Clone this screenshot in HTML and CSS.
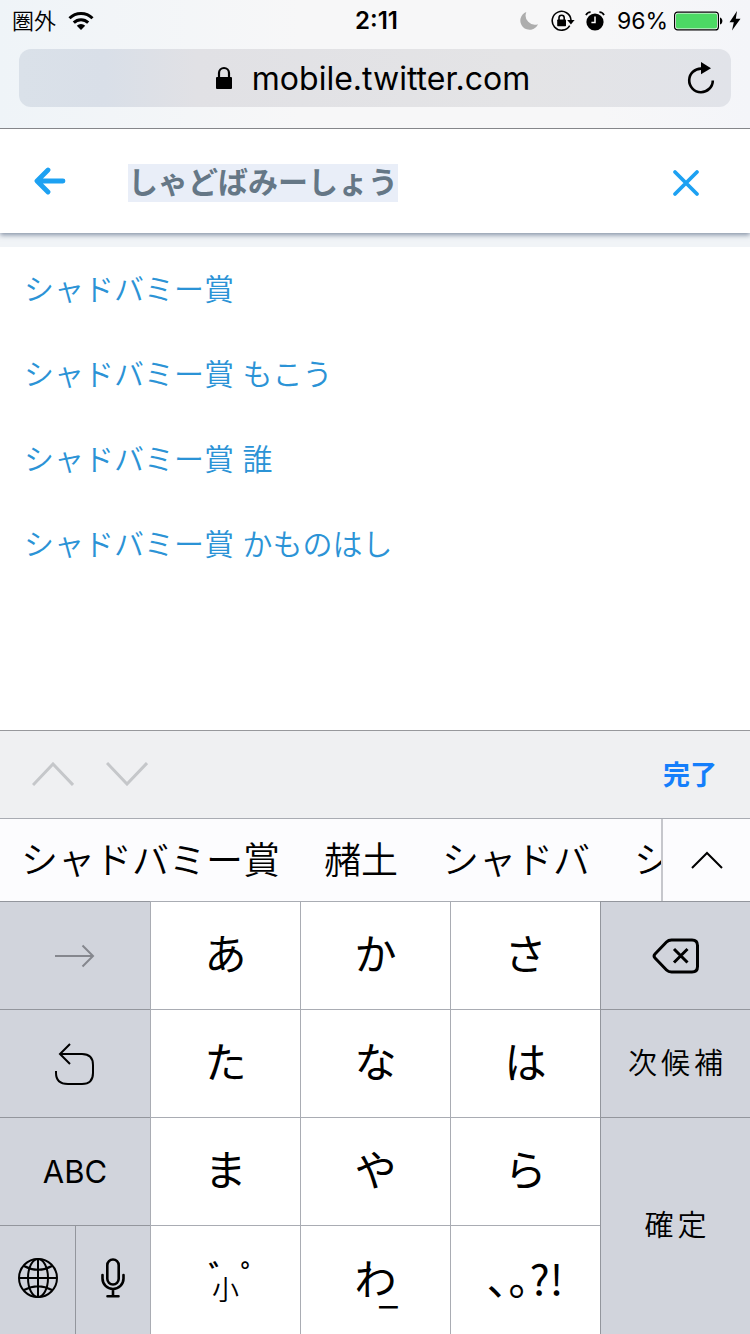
FILE: index.html
```html
<!DOCTYPE html>
<html lang="ja">
<head>
  <meta charset="UTF-8" />
  <meta name="viewport" content="width=device-width, initial-scale=1">
  <title>mobile.twitter.com</title>
  <link rel="stylesheet" href="styles.css">
</head>
<body>
  <header class="browser-bar">
    <div class="status-bar">
      <div class="status-left">
        <span class="carrier">圏外</span>
        <svg class="icon" width="26" height="20" viewBox="0 0 26 20" fill="none" stroke="#000" stroke-width="3">
          <path d="M1.5 7.2a16.4 16.4 0 0 1 23 0" />
          <path d="M5.8 11.6a10.3 10.3 0 0 1 14.4 0" />
          <path d="M13 19l-4.2-4.3a6 6 0 0 1 8.4 0z" fill="#000" stroke="none" />
        </svg>
      </div>
      <time class="clock">2:11</time>
      <div class="status-right">
        <svg class="icon" width="20" height="20" viewBox="0 0 20 20">
          <path d="M7.3 1A9.2 9.2 0 1 0 19 13.2 9.3 9.3 0 0 1 7.3 1z" fill="#adadad" />
        </svg>
        <svg class="icon lock-rotation" width="24" height="22" viewBox="0 0 24 22">
          <path d="M18.7 15.6A9.4 9.4 0 1 1 20 10" fill="none" stroke="#000" stroke-width="1.6" />
          <path d="M16.2 10h7.4l-3.7 4.4z" />
          <rect x="6.2" y="9.6" width="8.8" height="6.6" rx="0.6" />
          <path d="M8 10V7.8a2.6 2.6 0 0 1 5.2 0V10" fill="none" stroke="#000" stroke-width="1.6" />
        </svg>
        <svg class="icon alarm" width="20" height="20" viewBox="0 0 20 20">
          <circle cx="10" cy="11" r="8.6" />
          <path d="M1 4.2a5 5 0 0 1 4.6-3M19 4.2a5 5 0 0 0-4.6-3" fill="none" stroke="#000" stroke-width="1.7" />
          <path d="M10 5.6v6H6.4" fill="none" stroke="#fff" stroke-width="1.5" />
        </svg>
        <span class="battery-level">96%</span>
        <svg class="icon" width="50" height="20" viewBox="0 0 50 20">
          <rect x="0.6" y="1.1" width="43.8" height="17.8" rx="3" fill="#fff" stroke="#000" stroke-width="1.2" />
          <rect x="2" y="2.4" width="41" height="15.2" rx="1.8" fill="#4cd964" />
          <path d="M46 6.5c3.2 1 3.2 6 0 7z" />
        </svg>
        <svg class="icon bolt" width="12" height="20" viewBox="0 0 12 20">
          <path d="M8 0L0.5 11.2h4.3L3 19.4l8.5-11.6H6.8z" />
        </svg>
      </div>
    </div>
    <div class="address-bar">
      <button class="address" type="button">
        <svg class="icon" width="16" height="24" viewBox="0 0 16 24">
          <rect y="11" width="16" height="12" rx="1" />
          <path d="M3 12V7a5 5 0 0 1 10 0v5" fill="none" stroke="#000" stroke-width="2.2" />
        </svg>
        <span>mobile.twitter.com</span>
      </button>
      <button class="reload" type="button" aria-label="再読み込み">
        <svg class="icon" width="28" height="32" viewBox="0 0 28 32">
          <path d="M14.5 6.6A11.8 11.8 0 1 0 25.8 18.4" fill="none" stroke="#000" stroke-width="2.6" />
          <path d="M14 0l10 6.2-10 6z" />
        </svg>
      </button>
    </div>
  </header>

  <form class="search-bar">
    <button class="back" type="button" aria-label="戻る">
      <svg class="icon" width="32" height="28" viewBox="0 0 32 28" fill="none" stroke="#1da1f2" stroke-width="4.8" stroke-linecap="round" stroke-linejoin="round">
        <path d="M14 3L3 14l11 11M3.5 14H29" />
      </svg>
    </button>
    <label class="search-field">
      <input class="search-input" type="text" aria-label="検索" value="しゃどばみーしょう">
    </label>
    <button class="clear" type="button" aria-label="クリア">
      <svg class="icon" width="28" height="28" viewBox="0 0 28 28" fill="none" stroke="#1da1f2" stroke-width="3.8" stroke-linecap="round">
        <path d="M3 3l22 22M25 3L3 25" />
      </svg>
    </button>
  </form>

  <main class="results">
    <ul class="suggestions">
      <li><a href="#">シャドバミー賞</a></li>
      <li><a href="#">シャドバミー賞 もこう</a></li>
      <li><a href="#">シャドバミー賞 誰</a></li>
      <li><a href="#">シャドバミー賞 かものはし</a></li>
    </ul>
  </main>

  <section class="keyboard">
    <div class="accessory">
      <button type="button" aria-label="前へ">
        <svg class="icon" width="42" height="24" viewBox="0 0 42 24" fill="none" stroke="#c5c7ca" stroke-width="3">
          <path d="M1 23L21 2l20 21" />
        </svg>
      </button>
      <button type="button" aria-label="次へ">
        <svg class="icon" width="42" height="24" viewBox="0 0 42 24" fill="none" stroke="#c5c7ca" stroke-width="3">
          <path d="M1 1l20 21L41 1" />
        </svg>
      </button>
      <button class="done" type="button">完了</button>
    </div>

    <div class="candidates">
      <div class="candidate-list">
        <button type="button">シャドバミー賞</button>
        <button type="button">赭土</button>
        <button type="button">シャドバ</button>
        <button type="button">シ</button>
      </div>
      <button class="expand" type="button" aria-label="候補を表示">
        <svg class="icon" width="32" height="18" viewBox="0 0 32 18" fill="none" stroke="#000" stroke-width="2">
          <path d="M1 17L16 2l15 15" />
        </svg>
      </button>
    </div>

    <div class="keys">
      <button class="key side" type="button" aria-label="次の文字">
        <svg class="icon" width="40" height="24" viewBox="0 0 40 24" fill="none" stroke="#85878e" stroke-width="2">
          <path d="M0 12h38M27.5 1.5L38 12 27.5 22.5" />
        </svg>
      </button>
      <button class="key kana" type="button">あ</button>
      <button class="key kana" type="button">か</button>
      <button class="key kana" type="button">さ</button>
      <button class="key side" type="button" aria-label="削除">
        <svg class="icon" width="48" height="36" viewBox="0 0 48 36" fill="none" stroke="#000" stroke-width="3" stroke-linejoin="round">
          <path d="M19.5 2H40q5.5 0 5.5 5.5v21q0 5.5-5.5 5.5H19.5q-3 0-5-2L3 20q-2-2 0-4L14.5 4q2-2 5-2z" />
          <path d="M22 11l13.5 13.5M35.5 11L22 24.5" />
        </svg>
      </button>

      <button class="key side" type="button" aria-label="戻す">
        <svg class="icon" width="40" height="42" viewBox="0 0 40 42" fill="none" stroke="#000" stroke-width="2">
          <path d="M15 1L5 11l10 10M5 11h22q11 0 11 11v8q0 11-11 11H13Q1 41 1 30v-2" />
        </svg>
      </button>
      <button class="key kana" type="button">た</button>
      <button class="key kana" type="button">な</button>
      <button class="key kana" type="button">は</button>
      <button class="key side word" type="button">次候補</button>

      <button class="key side latin" type="button">ABC</button>
      <button class="key kana" type="button">ま</button>
      <button class="key kana" type="button">や</button>
      <button class="key kana" type="button">ら</button>
      <button class="key side word enter" type="button">確定</button>

      <div class="split">
        <button class="key side" type="button" aria-label="キーボードを切り替え">
          <svg class="icon" width="40" height="40" viewBox="0 0 40 40" fill="none" stroke="#000" stroke-width="2">
            <circle cx="20" cy="20" r="19" />
            <ellipse cx="20" cy="20" rx="10" ry="19" />
            <path d="M20 1v38M1 20h38M6 8q14 7.5 28 0M6 32q14-7.5 28 0" />
          </svg>
        </button>
        <button class="key side" type="button" aria-label="音声入力">
          <svg class="icon" width="24" height="40" viewBox="0 0 24 40" fill="none" stroke="#000" stroke-width="2.6" stroke-linecap="round">
            <rect x="6.3" y="1.5" width="11.4" height="25" rx="5.7" />
            <path d="M1.5 17v3.5a10.5 10.5 0 0 0 21 0V17M12 31v7M6.5 38.3h11" />
          </svg>
        </button>
      </div>
      <button class="key marks" type="button">
        <span class="voiced">゛゜</span>
        <span class="small">小</span>
      </button>
      <button class="key kana wa" type="button">わ<span class="bar">_</span></button>
      <button class="key kana punct" type="button">､｡?!</button>
    </div>
  </section>
</body>
</html>
```

FILE: styles.css
```css
:root {
  --link-blue: #2b93d6;
  --ios-blue: #147efb;
  --line: #a9acb3;
  --key-side: #d1d4dc;
  --jp: Inter, 'Noto Sans CJK JP', sans-serif;
}

* {
  box-sizing: border-box;
}

body {
  margin: 0;
  min-height: 100vh;
  display: flex;
  flex-direction: column;
  background: #fff;
  color: #000;
  font-family: var(--jp);
}

button {
  display: flex;
  align-items: center;
  justify-content: center;
  padding: 0;
  border: none;
  background: none;
  color: inherit;
  font: inherit;
  cursor: pointer;
}

.icon {
  display: block;
  flex-shrink: 0;
}

/* browser chrome */
.browser-bar {
  position: relative;
  z-index: 1;
  height: 129px;
  border-bottom: 1px solid #85868a;
  background: linear-gradient(90deg, #eff4f8, #f7f7f8 40%, #f7f7f8 80%, #f4f5f9);
}

.status-bar {
  display: grid;
  grid-template-columns: 1fr auto 1fr;
  align-items: center;
  height: 41px;
  padding: 0 9px 0 12px;
}

.status-left,
.status-right {
  display: flex;
  align-items: center;
}

.status-left {
  gap: 12px;
}

.status-right {
  justify-content: flex-end;
}

.carrier {
  padding-bottom: 4px;
  font-size: 22px;
  font-weight: 350;
}

.clock {
  font-size: 24px;
  font-weight: 600;
}

.lock-rotation {
  margin-left: 12px;
}

.alarm {
  margin: 0 12px 0 10px;
}

.battery-level {
  margin-right: 6px;
  font-size: 23px;
}

.bolt {
  margin-left: 5px;
}

.address-bar {
  display: flex;
  align-items: center;
  height: 58px;
  margin: 8px 19px 0;
  padding: 0 16px;
  border-radius: 12px;
  background: linear-gradient(90deg, #dae1e9, #d9dfe8 12%, #e1e1e5 25%, #e4e4e6 70%, #e1e3e9);
}

.address {
  flex: 1;
  gap: 20px;
  padding-left: 24px;
  font-size: 32px;
}

.search-bar {
  position: relative;
  display: flex;
  align-items: center;
  height: 104px;
  padding: 4px 50px 0 34px;
  background: #fff;
  box-shadow: 0 2px 5px rgba(60, 80, 110, 0.6);
}

.back {
  padding-bottom: 4px;
}

.search-field {
  flex: 1;
  margin-left: 62px;
}

.search-input {
  display: block;
  width: 9em;
  height: 38px;
  padding: 0 0 6px;
  border: none;
  outline: none;
  background: #e9eef8;
  color: #657786;
  font-family: var(--jp);
  font-size: 30px;
  font-weight: 700;
}

/* suggestions */
.results {
  flex: 1;
  padding-bottom: 100px;
  border-top: 14px solid #f1f4f7;
}

.suggestions {
  margin: 0;
  padding: 0;
  list-style: none;
}

.suggestions a {
  display: block;
  padding-left: 24px;
  color: var(--link-blue);
  font-size: 30px;
  font-weight: 350;
  line-height: 85px;
  text-decoration: none;
}

/* keyboard */
.accessory {
  display: flex;
  align-items: center;
  gap: 32px;
  height: 88px;
  padding: 0 33px 2px 32px;
  border-top: 1px solid #97989c;
  background: #eff0f2;
}

.done {
  margin-left: auto;
  color: var(--ios-blue);
  font-size: 27px;
  font-weight: 700;
}

.candidates {
  display: flex;
  height: 83px;
  border-top: 1px solid var(--line);
  background: #fcfcfe;
}

.candidate-list {
  flex: 1;
  display: flex;
  gap: 44px;
  min-width: 0;
  padding: 0 0 4px 21px;
  overflow: hidden;
  font-size: 37px;
  font-weight: 350;
  white-space: nowrap;
}

.candidate-list button {
  flex-shrink: 0;
}

.expand {
  width: 89px;
  border-left: 2px solid #c6c7cc;
}

.keys {
  display: grid;
  grid-template-columns: repeat(5, 1fr);
  grid-template-rows: repeat(3, 108px) 109px;
}

.key {
  border-top: 1px solid var(--line);
  border-left: 1px solid var(--line);
  background: #fff;
}

.key.side {
  border-color: #93969d;
  background: var(--key-side);
}

.keys > .key:nth-child(5n + 1),
.split .key:first-child {
  border-left: none;
}

.key.kana {
  padding-bottom: 8px;
  font-size: 42px;
}

.key.word {
  padding: 0 0 6px 4px;
  font-size: 29px;
  font-weight: 350;
  letter-spacing: 4px;
}

.key.latin {
  font-size: 31px;
}

.key.enter {
  grid-row: span 2;
}

.key.punct {
  font-family: 'Noto Sans CJK JP', sans-serif;
}

.split {
  display: grid;
  grid-template-columns: 1fr 1fr;
}

.split .key {
  padding-bottom: 4px;
}

.key.marks {
  flex-direction: column;
  padding-top: 8px;
}

.voiced {
  padding-left: 30px;
  font-size: 32px;
  font-weight: 500;
  line-height: 14px;
}

.small {
  font-size: 27px;
  font-weight: 350;
  line-height: 14px;
}

.key.wa {
  position: relative;
}

.bar {
  position: absolute;
  left: 78px;
  bottom: 18px;
  font-weight: 300;
}
```
